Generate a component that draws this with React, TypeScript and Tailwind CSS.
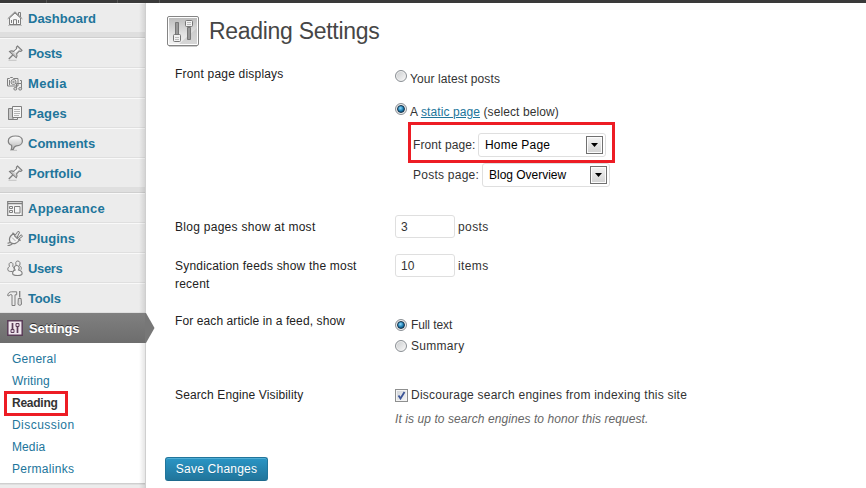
import React from 'react';

type IconName = 'home' | 'pin' | 'media' | 'pages' | 'comment' | 'layout' | 'plug' | 'users' | 'tools' | 'sliders';

const glyphs: Record<IconName, React.ReactNode> = {
  home: (
    <>
      <path d="M2.5 8v6.5h11V8L8 3z" fill="#f6f6f6" />
      <path d="M.7 8.8 8 1.8l7.3 7M11.5 5V2.5h2V7M2.5 8.5v6h11v-6" />
      <path d="M6.5 14.5V9.7h3v4.8M4.5 10v3M11.5 10v3" />
      <path d="M1 15.5h14" stroke="#c2c2c2" />
    </>
  ),
  pin: (
    <>
      <path d="M1.500 15.300h8" stroke="#c4c4c4" />
      <path d="M1.800 14 6 9.800" strokeWidth="1.300" />
      <path d="M2.500 6.500c1.500-.9 3-.8 4.200-.1l2.800-2.600C9 2.700 9.400 1.700 10.500 1L15 5.300c-.8 1-1.800 1.300-2.800.8L9.600 8.900c.7 1.300.6 2.600-.4 3.900z" fill="#dcdcdc" strokeWidth="1.100" />
      <path d="m8 7 3.500-3.200" stroke="#fff" strokeWidth="1.500" />
      <path d="m4.500 7 4.300 4.200" stroke="#b0b0b0" />
    </>
  ),
  media: (
    <>
      <path d="M.5 3.500h2l1-1h2l1 1h4.500v7.500H.5z" fill="#eee" />
      <circle cx="6.500" cy="7" r="2.500" fill="#fafafa" />
      <circle cx="6.500" cy="7" r=".8" />
      <path d="M2.500 5v5" />
      <path d="M9.500 13.500v-5h5v5" />
      <ellipse cx="8.300" cy="13.800" rx="1.500" ry="1.300" fill="#ddd" />
      <ellipse cx="13.200" cy="13.800" rx="1.500" ry="1.300" fill="#ddd" />
      <path d="M13 5.500h1.500v3" />
    </>
  ),
  pages: (
    <>
      <path d="M1.500 3.500H6v11H1.500z" fill="#c8c8c8" />
      <path d="M1.500 14.500h9V13" />
      <path d="M5.500 1.500h9v11h-9z" fill="#f7f7f7" />
      <path d="M7 4.500h6M7 6.500h6M7 8.500h6M7 10.500h5" stroke="#b5b5b5" />
    </>
  ),
  comment: (
    <>
      <path d="M3 15.300h7" stroke="#c0c0c0" />
      <path d="M8.500 1c4.200 0 6.900 1.900 6.900 4.900s-2.700 4.900-6 4.900c-1.600.2-2.600 1.400-3.200 3.700H4.300c.6-1.700.6-3 .3-4.300C2.500 9.500 1.300 8 1.300 5.900c0-3 3-4.900 7.200-4.900z" fill="url(#bubble)" strokeWidth="1.200" />
    </>
  ),
  layout: (
    <>
      <path d="M.7 1.500h14.600v14H.7z" fill="#f5f5f5" strokeWidth="1.200" />
      <path d="M1 3.500h14" strokeWidth="1.500" />
      <path d="M2.500 6.500h3v2h-3zM2.500 10.500h3v2h-3zM7.500 6.500h5.500v6.500H7.500z" />
    </>
  ),
  plug: (
    <>
      <path d="M.5 13c1.500.5 2.300-.2 3.300-1.300M.5 15.500c2 .2 3.700-.6 5-2" strokeWidth="1.200" />
      <path d="M3.300 12.500C1.500 9 2.800 6 6.500 3.800l6 6c-2.200 3.700-5.500 5-9.200 2.700z" fill="#f2f2f2" strokeWidth="1.200" />
      <path d="m5.500 2.800 8 8" strokeWidth="1.400" />
      <path d="m8 5.300 3-4 1.700.9-2.500 5M10.700 8 14.300 4.700l1.200 1.700-4 2.900" fill="#ddd" />
      <path d="m5 7.500 3.500 3.500M7 6l3 3" stroke="#aaa" />
    </>
  ),
  users: (
    <>
      <path d="M1 10.500C.3 8.500 1.300 7 2.500 6.500 1.500 4 2.300 2.500 4 2.500S6.500 4 5.700 6.500C7.200 7 7.500 8.500 7 11c-2 .8-4.500.8-6-.5z" fill="#eee" />
      <path d="M8.500 8c-.8-1-.2-1.800.8-2.300C8.200 3 8.700 1 10.800 1s2.900 2.300 1.700 4.700c1.800.8 2.200 2.300 1.500 4" fill="#eee" />
      <path d="M6 14.500c-1-2.200.3-3.800 2.200-4.500-1.700-2.500-.7-4.500 1.500-4.500s3.200 2.200 1.800 4.500c2.700.7 4.200 2.300 3.300 4.500-2 1.400-6.500 1.400-8.800 0z" fill="#f4f4f4" strokeWidth="1.100" />
    </>
  ),
  tools: (
    <>
      <path d="M.6 5.500C1 3 2.500 1.800 4.500 1.800h5.200v3H8v10.700H5V5C3.500 4.300 2.500 4.500 2 6z" fill="#ececec" />
      <path d="M12.700 1v6.500" strokeWidth="1.300" />
      <path d="M11.300 8.500 11 14c0 1.700 3.500 1.700 3.500 0l-.4-5.500z" fill="#ddd" />
    </>
  ),
  sliders: (
    <>
      <path d="M.8.800h14.400v14.400H.8z" fill="#f1e6ef" stroke="#5a3d58" strokeWidth="1.500" />
      <path d="M5.500 3v7M10.500 6.500V13" stroke="#5a3d58" strokeWidth="1.700" />
      <path d="M4 9.500h3v3H4zM9 3.500h3v3H9z" fill="#e6d4e3" stroke="#5a3d58" />
    </>
  ),
};

function MenuIcon({ name }: { name: IconName }) {
  return (
    <svg width="16" height="16" viewBox="0 0 16 16" fill="none" stroke="#7f7f7f" strokeWidth="1" className="shrink-0">
      <defs>
        <linearGradient id="bubble" x1="0" y1="0" x2="0" y2="1">
          <stop offset="0" stopColor="#fff" />
          <stop offset="1" stopColor="#b5b5b5" />
        </linearGradient>
      </defs>
      {glyphs[name]}
    </svg>
  );
}

function MenuItem({ icon, label, tracking = '' }: { icon: IconName; label: string; tracking?: string }) {
  return (
    <li className="flex h-[30px] items-center gap-[5px] border-t border-b border-t-[#f9f9f9] border-b-[#dfdfdf] pl-[7px]">
      <MenuIcon name={icon} />
      <span className={`pt-[2px] text-[13px] leading-[18px] font-bold text-[#21759b] ${tracking}`}>{label}</span>
    </li>
  );
}

function Separator() {
  return <li className="h-[5px] border-b border-[#cfcfcf] bg-[#dfdfdf]" />;
}

function SubItem({ label, tracking }: { label: string; tracking: string }) {
  return <li className={`h-[22px] pl-3 leading-[22px] text-[#21759b] ${tracking}`}>{label}</li>;
}

function Radio({ checked = false }: { checked?: boolean }) {
  return (
    <span className="flex size-3 shrink-0 items-center justify-center rounded-full border border-[#8a8f94] bg-linear-to-br from-[#c9cbcd] to-[#fafafa] shadow-[inset_0_0_0_1px_#f0f0f0]">
      {checked && <span className="size-2 rounded-full border border-[#14324b] bg-[radial-gradient(circle_at_40%_35%,#8fdcff,#1878ad_55%,#0b3653)]" />}
    </span>
  );
}

function Select({ value, tracking }: { value: string; tracking: string }) {
  return (
    <span className="flex h-6 w-32 items-center justify-between rounded-[3px] border border-[#dfdfdf] bg-white pr-[2px] pl-[6px] text-black">
      <span className={tracking}>{value}</span>
      <span className="flex h-[18px] w-[17px] items-center justify-center border border-[#707070] bg-linear-to-b from-[#f4f4f4] to-[#d2d2d2] shadow-[inset_0_0_0_1px_#fcfcfc]">
        <svg width="7" height="4" viewBox="0 0 7 4" className="mt-px"><path d="M0 0h7L3.500 4z" fill="#000" /></svg>
      </span>
    </span>
  );
}

function NumberField({ value }: { value: string }) {
  return <span className="h-[23px] w-[60px] rounded-[3px] border border-[#dfdfdf] pl-[5px] leading-[22px]">{value}</span>;
}

function Sidebar() {
  return (
    <nav className="relative w-[146px] shrink-0 border-r border-[#cfcfcf] bg-[#ececec]">
      <ul>
        <MenuItem icon="home" label="Dashboard" />
        <Separator />
        <MenuItem icon="pin" label="Posts" tracking="tracking-[-0.3px]" />
        <MenuItem icon="media" label="Media" tracking="tracking-[0.4px]" />
        <MenuItem icon="pages" label="Pages" tracking="tracking-[0.1px]" />
        <MenuItem icon="comment" label="Comments" />
        <MenuItem icon="pin" label="Portfolio" />
        <Separator />
        <MenuItem icon="layout" label="Appearance" tracking="tracking-[0.25px]" />
        <MenuItem icon="plug" label="Plugins" />
        <MenuItem icon="users" label="Users" tracking="tracking-[-0.35px]" />
        <MenuItem icon="tools" label="Tools" tracking="tracking-[-0.2px]" />
        <li className="relative z-10 flex h-[30px] items-center gap-[6px] bg-linear-to-b from-[#808080] to-[#6d6d6d] pl-[7px]">
          <MenuIcon name="sliders" />
          <span className="pt-[2px] text-[13px] leading-[18px] font-bold tracking-[-0.1px] text-white [text-shadow:0_-1px_0_#333]">Settings</span>
          <svg width="10" height="30" viewBox="0 0 10 30" className="absolute top-0 left-[145px]">
            <path d="M0 0h1l8.500 15L1 30H0z" fill="#777" />
          </svg>
        </li>
      </ul>
      <ul className="h-[140px] bg-white pt-[5px] text-[12px]">
        <SubItem label="General" tracking="tracking-[0.25px]" />
        <SubItem label="Writing" tracking="tracking-[0.1px]" />
        <li className="relative h-[22px] pl-3 leading-[22px] font-bold tracking-[-0.25px] text-[#333]">
          Reading
          <span className="absolute -top-px left-1 h-[25px] w-16 border-3 border-[#ed1c24]" />
        </li>
        <SubItem label="Discussion" tracking="tracking-[0.45px]" />
        <SubItem label="Media" tracking="tracking-[0.1px]" />
        <SubItem label="Permalinks" tracking="tracking-[0.3px]" />
      </ul>
      <div className="h-[2px] border-t border-[#cfcfcf] bg-[#dfdfdf]" />
      <div className="pointer-events-none absolute inset-y-0 right-0 w-[6px] bg-linear-to-r from-transparent to-black/10" />
    </nav>
  );
}

function Row({ label, height, children }: { label: React.ReactNode; height: string; children: React.ReactNode }) {
  return (
    <div className={`flex ${height}`}>
      <div className="w-[220px] shrink-0 leading-[18px] text-[#222]">{label}</div>
      <div className="flex flex-col">{children}</div>
    </div>
  );
}

function Content() {
  return (
    <main className="flex-1 bg-white">
      <header className="flex h-[62px] items-start pt-[13px] pl-[21px]">
        <svg width="32" height="31" viewBox="0 0 32 31" fill="none">
          <defs>
            <linearGradient id="panel" x1="0" y1="0" x2="0" y2="1">
              <stop offset="0" stopColor="#bdbdbd" />
              <stop offset=".6" stopColor="#e2e2e2" />
              <stop offset="1" stopColor="#f2f2f2" />
            </linearGradient>
          </defs>
          <rect x=".5" y=".5" width="31" height="29" rx="1.500" fill="#fff" stroke="#858585" />
          <rect x="2" y="2" width="28" height="26" fill="url(#panel)" />
          <path d="M12 28 30 12v16z" fill="#bbb" opacity=".5" />
          <path d="M2 30.500h28" stroke="#ccc" />
          <path d="M8.500 6.500h3v13h-3zM20.500 11.500h3v12h-3z" fill="#999" stroke="#777" />
          <rect x="6.500" y="18.500" width="7" height="7" rx="1" fill="#f2f2f2" stroke="#777" />
          <rect x="18.500" y="4.500" width="7" height="6" rx="1" fill="#f2f2f2" stroke="#777" />
          <path d="M8 21.500h4M8 23.500h4M20 6.500h4M20 8.500h4" stroke="#bbb" />
        </svg>
        <h1 className="pl-[10px] text-[23px] leading-[30px] tracking-[-0.3px] text-[#464646]">Reading Settings</h1>
      </header>

      <div className="pl-[29px]">
        <Row label={<span className="tracking-[0.2px]">Front page displays</span>} height="h-[153px]">
          <div className="flex h-[33px] pt-[5px]">
            <Radio />
            <span className="pt-px pl-[3px] leading-[16px] tracking-[0.1px]">Your latest posts</span>
          </div>
          <div className="flex h-[30px] pt-[5px]">
            <Radio checked />
            <span className="pt-px pl-[3px] leading-[16px] whitespace-pre tracking-[0.1px]">
              A <a className="text-[#21759b] underline">static page</a> (select below)
            </span>
          </div>
          <div className="relative ml-[18px] flex h-[30px] items-center pt-[3px]">
            <span className="w-[65px] tracking-[0.1px]">Front page:</span>
            <Select value="Home Page" tracking="tracking-[0.2px]" />
            <span className="absolute top-[-6px] left-[-5px] h-[41px] w-[207px] border-3 border-[#ed1c24]" />
          </div>
          <div className="ml-[18px] flex h-[30px] items-center pt-[3px]">
            <span className="w-[69px] tracking-[0.25px]">Posts page:</span>
            <Select value="Blog Overview" tracking="tracking-[-0.02px]" />
          </div>
        </Row>
        <Row label={<span className="tracking-[0.28px]">Blog pages show at most</span>} height="h-[39px]">
          <div className="-mt-[3px] flex items-center gap-[3px]">
            <NumberField value="3" />
            <span className="tracking-[0.4px]">posts</span>
          </div>
        </Row>
        <Row
          label={
            <>
              <span className="tracking-[0.2px]">Syndication feeds show the most</span>
              <br />
              <span className="tracking-[0.2px]">recent</span>
            </>
          }
          height="h-[55px]"
        >
          <div className="-mt-[3px] flex items-center gap-[3px]">
            <NumberField value="10" />
            <span className="tracking-[0.4px]">items</span>
          </div>
        </Row>
        <Row label={<span className="tracking-[0.1px]">For each article in a feed, show</span>} height="h-[74px]">
          <div className="flex h-[21px] items-center gap-1 pt-[5px]">
            <Radio checked />
            <span className="tracking-[-0.1px]">Full text</span>
          </div>
          <div className="flex h-[21px] items-center gap-1 pt-[5px]">
            <Radio />
            <span className="tracking-[0.3px]">Summary</span>
          </div>
        </Row>
        <Row label={<span className="tracking-[0.13px]">Search Engine Visibility</span>} height="h-[71px]">
          <div className="flex h-[18px] items-center gap-[3px]">
            <span className="flex size-[13px] items-center justify-center border border-[#8e8f8f] bg-linear-to-br from-[#cfd3d8] to-[#f7f7f7] shadow-[inset_0_0_0_1px_#f4f4f4]">
              <svg width="9" height="9" viewBox="0 0 9 9" fill="none"><path d="m1.500 4.500 2 3 4-6.500" stroke="#3b5497" strokeWidth="1.800" /></svg>
            </span>
            <span className="tracking-[0.23px]">Discourage search engines from indexing this site</span>
          </div>
          <p className="pt-[6px] leading-[18px] tracking-[0.08px] text-[#666] italic">It is up to search engines to honor this request.</p>
        </Row>
      </div>
      <button className="ml-[19px] h-6 w-[103px] rounded-[3px] border border-[#21759b] border-b-[#1e6a8d] bg-linear-to-b from-[#2a95c5] to-[#21759b] text-[12px] leading-[22px] tracking-[0.22px] text-white shadow-[inset_0_1px_0_rgba(120,200,230,0.5)] [text-shadow:0_1px_0_rgba(0,0,0,0.1)]">
        Save Changes
      </button>
    </main>
  );
}

export default function App() {
  return (
    <div className="flex h-[488px] w-[866px] flex-col overflow-hidden bg-white font-['Liberation_Sans',Arial,sans-serif] text-[12px] leading-[18px] text-[#333]">
      <div className="flex h-[3px] shrink-0 bg-[#3a3a3a]">
        <span className="w-[47px] border-r border-[#555]" />
        <span className="w-[71px] border-r border-[#555]" />
        <span className="w-[42px] border-r border-[#555]" />
      </div>
      <div className="flex flex-1">
        <Sidebar />
        <Content />
      </div>
    </div>
  );
}
